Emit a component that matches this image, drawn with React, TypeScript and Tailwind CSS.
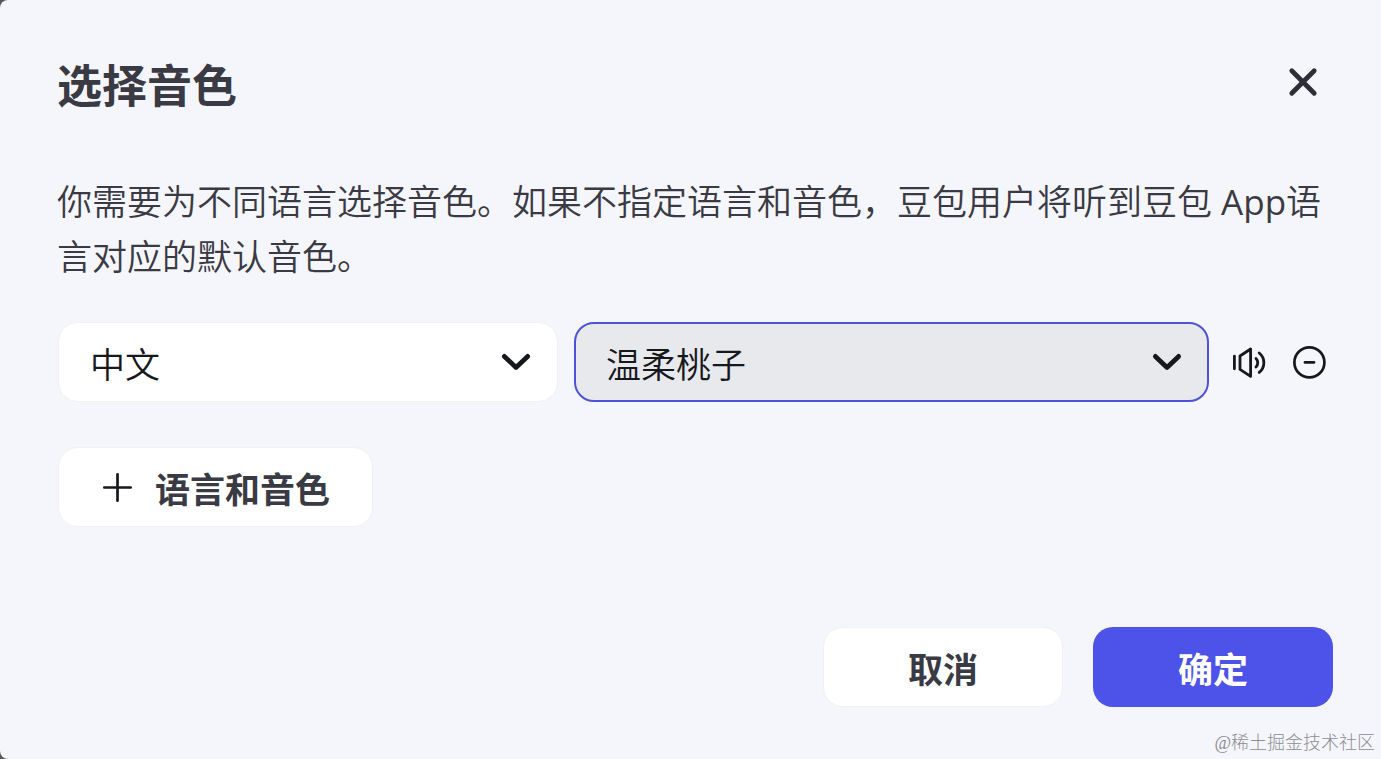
// src/components/VoicePickerDialog.tsx
import React, { useState } from 'react';

const languages = ['中文', 'English', '日本語'];
const voices = ['温柔桃子', '爽快思思', '阳光青年'];

function CloseIcon() {
  return (
    <svg className="size-8" viewBox="0 0 32 32" fill="none" stroke="currentColor" strokeWidth="4.8" strokeLinecap="round" aria-hidden="true">
      <path d="M4.8 4.8 27.2 27.2M27.2 4.8 4.8 27.2" />
    </svg>
  );
}

function ChevronIcon() {
  return (
    <svg className="pointer-events-none absolute top-1/2 right-6 size-9 -translate-y-1/2" viewBox="0 0 36 36" fill="none" stroke="#17181c" strokeWidth="4.8" strokeLinecap="round" strokeLinejoin="round" aria-hidden="true">
      <path d="M6.4 12.4 18 23.4 29.6 12.4" />
    </svg>
  );
}

function SpeakerIcon() {
  return (
    <svg className="h-9 w-9" viewBox="0 0 36 36" fill="none" stroke="currentColor" strokeWidth="2.8" strokeLinecap="round" strokeLinejoin="round" aria-hidden="true">
      <path d="M3.4 12.2v12.6" />
      <path d="M9 12 19.6 5v27.4L9 25.4z" />
      <path d="M25 14.4c2.3 2.2 2.3 6.4 0 8.6" />
      <path d="M28.2 9c6.2 5 6.2 14.4 0 19.4" />
    </svg>
  );
}

function MinusCircleIcon() {
  return (
    <svg className="h-9 w-9" viewBox="0 0 36 36" fill="none" stroke="currentColor" strokeWidth="2.7" strokeLinecap="round" aria-hidden="true">
      <circle cx="18.4" cy="18.4" r="15" />
      <path d="M14 18.4h9" />
    </svg>
  );
}

function PlusIcon() {
  return (
    <svg className="size-8" viewBox="0 0 32 32" fill="none" stroke="#17181c" strokeWidth="2.7" strokeLinecap="round" aria-hidden="true">
      <path d="M16.5 3.3v26.4M3.3 16.5h26.4" />
    </svg>
  );
}

export default function App() {
  const [language, setLanguage] = useState(languages[0]);
  const [voice, setVoice] = useState(voices[0]);

  return (
    <div className="min-h-screen bg-[#55565b] font-['Open_Sans','Noto_Sans_CJK_SC',sans-serif] text-[35px] text-[#3a3a44]">
      <main role="dialog" aria-labelledby="voice-title" className="flex min-h-screen flex-col rounded-l-lg bg-[#f5f6fb] pt-[50px] pr-12 pl-[57px]">
        <header className="flex items-center justify-between pr-[14px]">
          <h1 id="voice-title" className="text-[45px] leading-[72px] font-bold">选择音色</h1>
          <button type="button" aria-label="关闭" className="mb-2 text-[#2e2e36]">
            <CloseIcon />
          </button>
        </header>

        <p className="mt-[52px] font-['Open_Sans','Noto_Sans_CJK_SC_DemiLight','Noto_Sans_CJK_SC',sans-serif] leading-[55px]">
          你需要为不同语言选择音色。如果不指定语言和音色，豆包用户将听到豆包 App语言对应的默认音色。
        </p>

        <div className="mt-[38px] ml-px flex items-center text-[#17181c]">
          <div className="relative min-w-0 flex-[500_1_0%]">
            <select
              aria-label="语言"
              value={language}
              onChange={e => setLanguage(e.target.value)}
              className="h-20 w-full appearance-none rounded-[20px] border border-[#f0f1f4] bg-white pt-1.5 pl-[31px] font-[350] outline-none"
            >
              {languages.map(l => <option key={l}>{l}</option>)}
            </select>
            <ChevronIcon />
          </div>
          <div className="relative ml-4 min-w-0 flex-[635_1_0%]">
            <select
              aria-label="音色"
              value={voice}
              onChange={e => setVoice(e.target.value)}
              className="h-20 w-full appearance-none rounded-[20px] border-2 border-[#4e52d6] bg-[#e8e9ed] pt-1.5 pl-[30px] font-[350] outline-none"
            >
              {voices.map(v => <option key={v}>{v}</option>)}
            </select>
            <ChevronIcon />
          </div>
          <button type="button" aria-label="试听" className="ml-[22px]">
            <SpeakerIcon />
          </button>
          <button type="button" aria-label="删除" className="mr-[6px] ml-6">
            <MinusCircleIcon />
          </button>
        </div>

        <button type="button" className="mt-[45px] ml-px flex h-20 items-center gap-[22px] self-start rounded-[20px] border border-[#f0f1f4] bg-white px-[42px] font-bold">
          <PlusIcon />
          <span className="pt-1.5">语言和音色</span>
        </button>

        <footer className="mt-[100px] flex justify-end gap-[30px] font-bold">
          <button type="button" className="h-20 w-60 rounded-[20px] border border-[#f0f1f4] bg-white pt-1.5">取消</button>
          <button type="button" className="h-20 w-60 rounded-[20px] bg-[#4d53e8] pt-1.5 text-white">确定</button>
        </footer>

        <div className="mt-auto -mr-[42px] self-end pb-1 font-['Liberation_Serif','Noto_Sans_CJK_SC',serif] text-lg leading-6 font-light text-[#8c8d92]">
          @稀土掘金技术社区
        </div>
      </main>
    </div>
  );
}
